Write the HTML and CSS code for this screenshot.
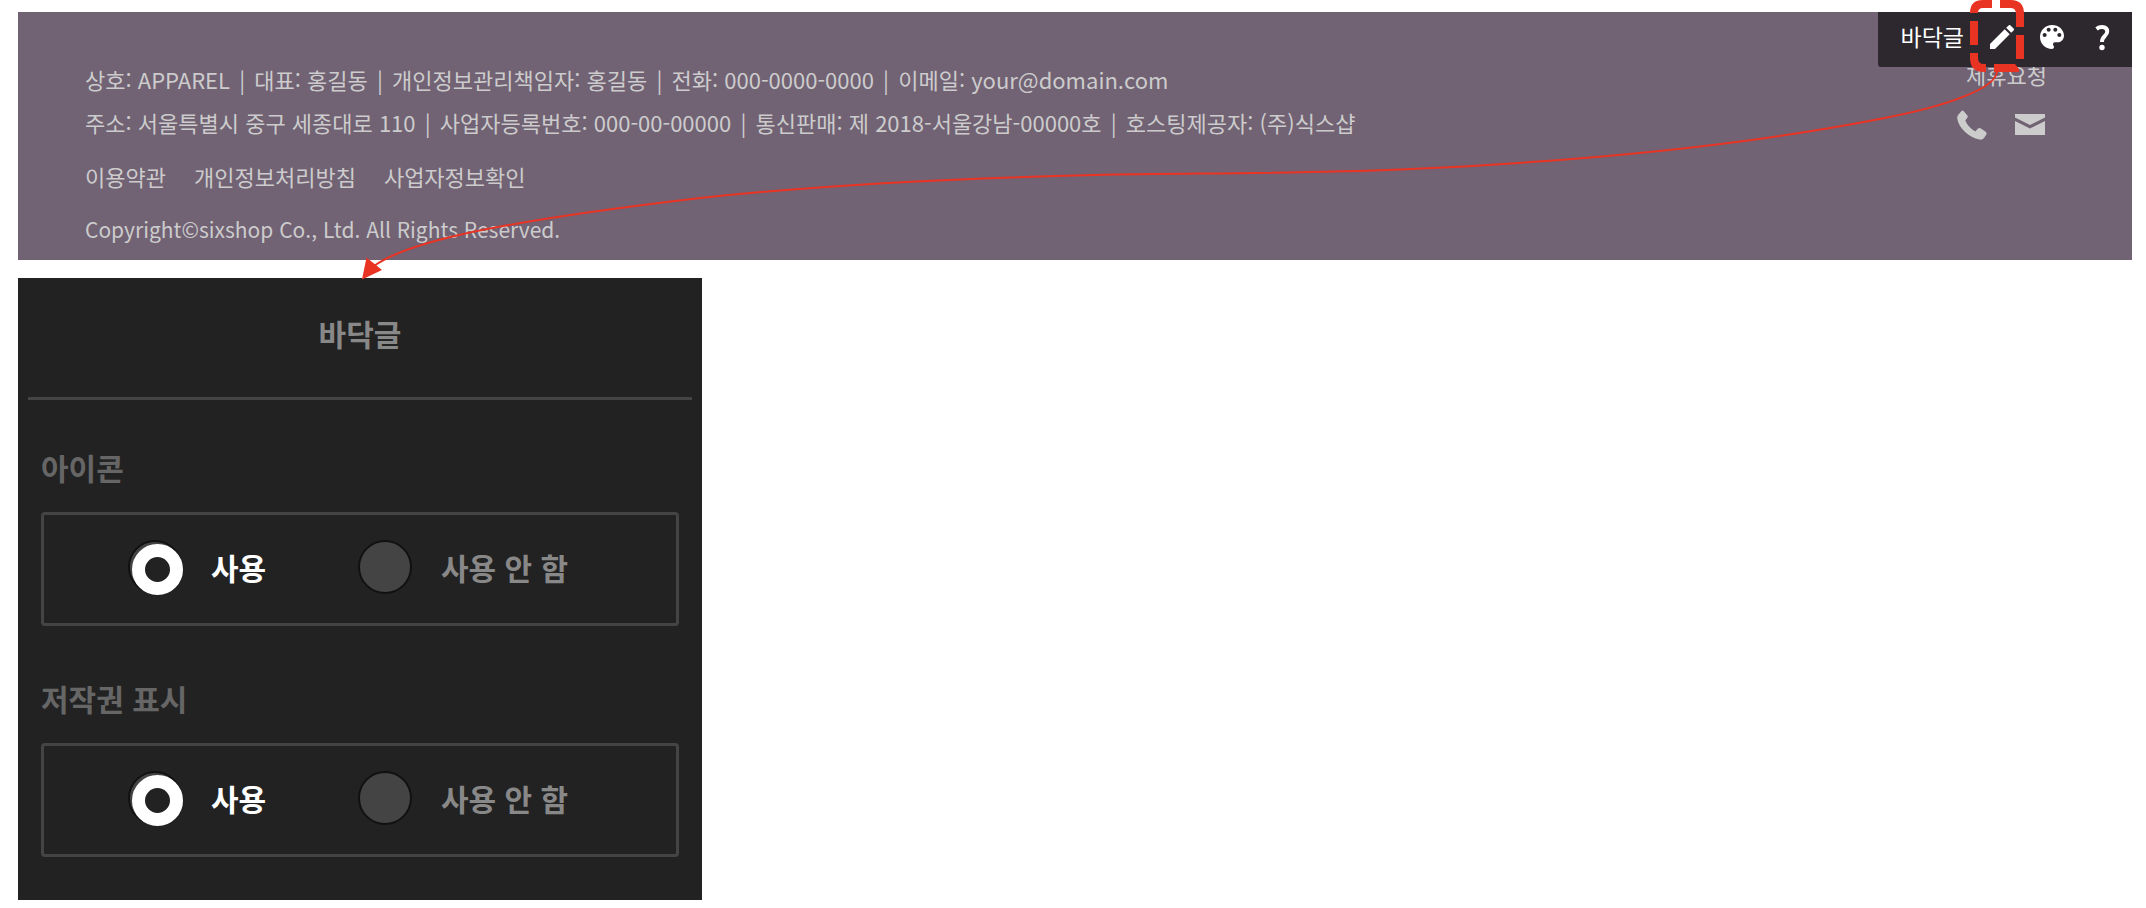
FILE: index.html
```html
<!DOCTYPE html>
<html lang="ko">
<head>
  <meta charset="UTF-8">
  <meta name="viewport" content="width=device-width, initial-scale=1.0">
  <title>바닥글</title>
  <link rel="stylesheet" href="styles.css">
</head>
<body>
  <!-- Shop footer -->
  <footer class="footer">
    <div class="footer-info">
      <p>상호: APPAREL <span class="sep">|</span> 대표: 홍길동 <span class="sep">|</span> 개인정보관리책임자: 홍길동 <span class="sep">|</span> 전화: 000-0000-0000 <span class="sep">|</span> 이메일: your@domain.com</p>
      <p>주소: 서울특별시 중구 세종대로 110 <span class="sep">|</span> 사업자등록번호: 000-00-00000 <span class="sep">|</span> 통신판매: 제 2018-서울강남-00000호 <span class="sep">|</span> 호스팅제공자: (주)식스샵</p>
      <nav class="footer-links">
        <a href="#">이용약관</a>
        <a href="#">개인정보처리방침</a>
        <a href="#">사업자정보확인</a>
      </nav>
      <p class="copyright">Copyright©sixshop Co., Ltd. All Rights Reserved.</p>
    </div>

    <div class="footer-contact">
      <a href="#">제휴요청</a>
      <div class="contact-icons">
        <a href="#" aria-label="전화">
          <svg width="32" height="32" viewBox="0 0 32 32">
            <path d="M2.500 5.500 5.500 2Q6.600 1 7.800 2.200L11.400 6.400Q12.300 7.600 11.300 8.800L9.300 11.400C10.800 15.500 14.500 19.800 19.400 22.600L22 19.600Q23.200 18.500 24.500 19.300L29.700 22.800Q31.200 24 30.400 25.400L28 29Q26.600 31 23.500 30.600C13 28.500 2.500 19 1.200 9.500Q1 7.200 2.500 5.500Z"/>
          </svg>
        </a>
        <a href="#" aria-label="이메일">
          <svg width="32" height="32" viewBox="0 0 32 32">
            <path d="M1 5H31V8.500L16 16 1 8.500Z"/>
            <path d="M1 12 16 19.500 31 12V26H1Z"/>
          </svg>
        </a>
      </div>
    </div>

    <!-- Edit toolbar -->
    <div class="toolbar">
      <span class="toolbar-title">바닥글</span>
      <button type="button" aria-label="편집">
        <svg width="32" height="32" viewBox="0 0 24 24">
          <path d="M3 17.250V21h3.750L17.810 9.940l-3.750-3.750L3 17.250zM20.710 7.040c.39-.39.39-1.020 0-1.410l-2.340-2.340c-.39-.39-1.020-.39-1.410 0l-1.830 1.830 3.750 3.750 1.830-1.830z"/>
        </svg>
      </button>
      <button type="button" aria-label="디자인">
        <svg width="32" height="32" viewBox="0 0 24 24">
          <path d="M12 3c-4.970 0-9 4.030-9 9s4.030 9 9 9c.83 0 1.500-.67 1.500-1.500 0-.39-.15-.74-.39-1.010-.23-.26-.38-.61-.38-.99 0-.83.67-1.500 1.500-1.500H16c2.760 0 5-2.240 5-5 0-4.420-4.030-8-9-8zm-5.500 9c-.83 0-1.500-.67-1.500-1.500S5.670 9 6.500 9 8 9.670 8 10.500 7.330 12 6.500 12zm3-4C8.670 8 8 7.330 8 6.500S8.670 5 9.500 5s1.500.67 1.500 1.500S10.330 8 9.500 8zm5 0c-.83 0-1.500-.67-1.500-1.500S13.670 5 14.500 5s1.500.67 1.500 1.500S15.330 8 14.500 8zm3 4c-.83 0-1.500-.67-1.500-1.500S16.670 9 17.500 9s1.500.67 1.500 1.500-.67 1.500-1.500 1.500z"/>
        </svg>
      </button>
      <button type="button" aria-label="도움말">
        <svg width="32" height="32" viewBox="0 0 32 32">
          <path class="stroke" d="M10.500 7.800Q13 6 16 6C19.500 6 21.200 7.900 21.200 10.500C21.200 15 16 15 16 21"/>
          <circle cx="16" cy="26.500" r="2.700"/>
        </svg>
      </button>
    </div>
  </footer>

  <!-- Footer settings -->
  <form class="panel">
    <h1>바닥글</h1>
    <fieldset>
      <legend>아이콘</legend>
      <div class="options">
        <label><input type="radio" name="icon" value="on" checked>사용</label>
        <label><input type="radio" name="icon" value="off">사용 안 함</label>
      </div>
    </fieldset>
    <fieldset>
      <legend>저작권 표시</legend>
      <div class="options">
        <label><input type="radio" name="copyright" value="on" checked>사용</label>
        <label><input type="radio" name="copyright" value="off">사용 안 함</label>
      </div>
    </fieldset>
  </form>

  <!-- Callout from the edit button to the panel -->
  <svg class="callout" viewBox="0 0 2146 300" aria-hidden="true">
    <path class="callout-line" d="M1997 72C1995 88 1950 106 1877 119.500C1735 147 1570 162 1400 169.500C1290 174 1190 173 1095 175C960 178 830 184 700 198C615 208 530 219 459 235C420 244 392 253 374 266"/>
    <path class="callout-head" d="M362 279.500 366.500 257.500 382 270Z"/>
    <path class="callout-box" d="M1974 13Q1974 4 1983 4H1992M2000 4H2011Q2020 4 2020 14V27M2020 35V59M1974 21V45M1974 53V58Q1974 68 1984 68H1986"/>
    <path class="callout-head" d="M1994 64H2015L2019 69V72H1994Z"/>
  </svg>
</body>
</html>
```
FILE: styles.css
```css
* {
  margin: 0;
  padding: 0;
  box-sizing: border-box;
}

body {
  position: relative;
  padding: 12px 14px 8px 18px;
  background: #fff;
  font-family: 'Noto Sans CJK KR', sans-serif;
}

a {
  color: inherit;
  text-decoration: none;
}

svg {
  display: block;
  fill: currentColor;
}

/* Footer */
.footer {
  position: relative;
  display: flex;
  justify-content: space-between;
  padding: 46px 85px 9px 67px;
  background: #716274;
  color: #ccc;
  font-size: 22px;
  line-height: 43px;
}

.sep {
  margin: 0 3px;
}

.footer-links {
  display: flex;
  gap: 28px;
  margin: 11px 0 10px;
}

.copyright {
  font-size: 21px;
}

.footer-contact {
  display: flex;
  flex-direction: column;
  align-items: flex-end;
  margin-top: -5px;
}

.contact-icons {
  display: flex;
  gap: 26px;
  margin: 13px 1px 0 0;
}

/* Toolbar */
.toolbar {
  position: absolute;
  top: 0;
  right: 0;
  display: flex;
  align-items: center;
  gap: 18px;
  height: 55px;
  padding: 0 14px 6px 23px;
  background: #2d272e;
  border-bottom-left-radius: 3px;
  color: #fff;
}

.toolbar-title {
  margin-right: 4px;
  font-size: 23px;
}

.toolbar button {
  background: none;
  border: none;
  color: inherit;
  cursor: pointer;
}

.stroke {
  fill: none;
  stroke: currentColor;
  stroke-width: 4;
}

/* Settings panel */
.panel {
  width: 100%;
  max-width: 684px;
  margin-top: 18px;
  padding: 0 10px 43px;
  background: #222;
  color: #888;
  font-size: 30px;
  font-weight: bold;
  line-height: 44px;
}

.panel h1 {
  padding: 33px 0 42px;
  border-bottom: 3px solid #444;
  font-size: 30px;
  text-align: center;
}

.panel fieldset {
  margin: 0 13px;
  padding-top: 45px;
  border: none;
}

.panel fieldset + fieldset {
  padding-top: 50px;
}

.panel legend {
  float: left;
  width: 100%;
  margin-bottom: 23px;
  color: #666;
}

.options {
  clear: both;
  display: grid;
  grid-template-columns: 230px 1fr;
  align-items: center;
  height: 114px;
  padding: 0 0 4px 84px;
  border: 3px solid #444;
  border-radius: 4px;
}

.options label {
  display: flex;
  align-items: center;
  gap: 29px;
  cursor: pointer;
}

.options label:has(:checked) {
  color: #fff;
}

.options input {
  appearance: none;
  width: 54px;
  height: 54px;
  background: #444;
  border: 2px solid #111;
  border-radius: 50%;
}

.options input:checked::before {
  content: '';
  display: block;
  box-sizing: border-box;
  width: 51px;
  height: 51px;
  margin: 2px;
  background: #222;
  border: 13px solid #fff;
  border-radius: 50%;
}

/* Callout */
.callout {
  position: absolute;
  top: 0;
  left: 0;
  width: 100%;
  color: #e93323;
  pointer-events: none;
}

.callout-line {
  fill: none;
  stroke: currentColor;
  stroke-width: 2;
}

.callout-box {
  fill: none;
  stroke: currentColor;
  stroke-width: 8;
}
```
